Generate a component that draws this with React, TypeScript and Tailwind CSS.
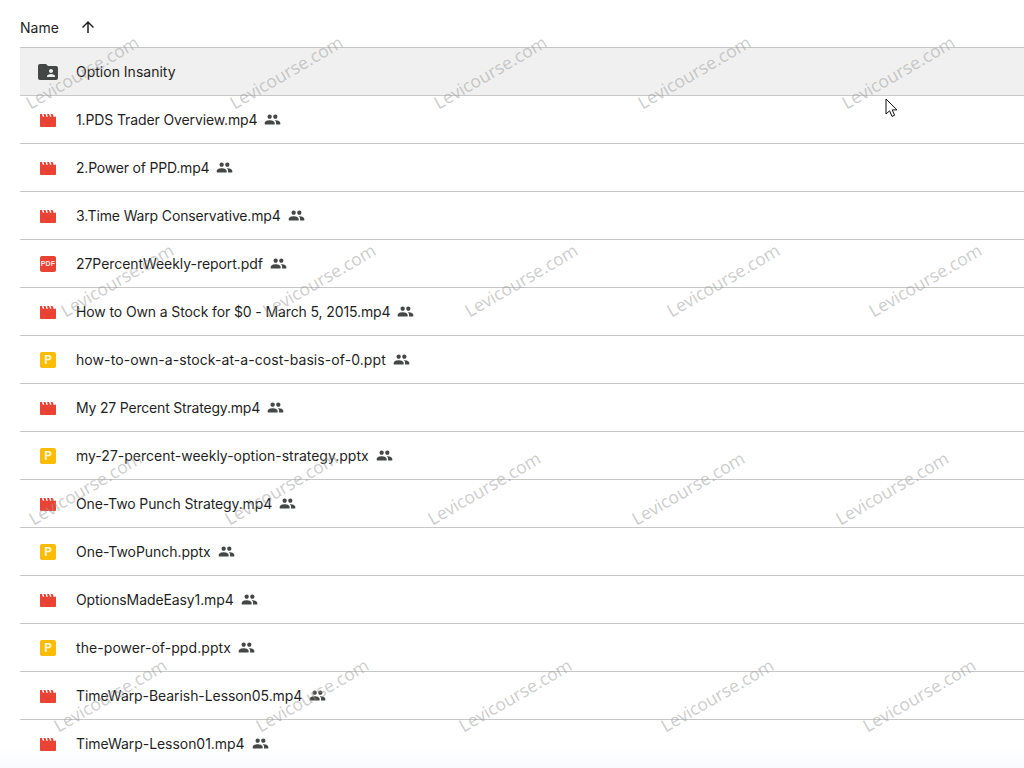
const files: [string, 'v' | 'p' | 'd', string][] = [
  ['1.PDS Trader Overview.mp4', 'v', 'tracking-[-0.12px]'],
  ['2.Power of PPD.mp4', 'v', 'tracking-[-0.2px]'],
  ['3.Time Warp Conservative.mp4', 'v', 'tracking-[-0.15px]'],
  ['27PercentWeekly-report.pdf', 'd', 'tracking-[-0.05px]'],
  ['How to Own a Stock for $0 - March 5, 2015.mp4', 'v', 'tracking-[-0.12px]'],
  ['how-to-own-a-stock-at-a-cost-basis-of-0.ppt', 'p', 'tracking-[0.08px]'],
  ['My 27 Percent Strategy.mp4', 'v', 'tracking-[-0.19px]'],
  ['my-27-percent-weekly-option-strategy.pptx', 'p', 'tracking-normal'],
  ['One-Two Punch Strategy.mp4', 'v', 'tracking-[-0.11px]'],
  ['One-TwoPunch.pptx', 'p', 'tracking-[-0.05px]'],
  ['OptionsMadeEasy1.mp4', 'v', 'tracking-[-0.1px]'],
  ['the-power-of-ppd.pptx', 'p', 'tracking-[0.07px]'],
  ['TimeWarp-Bearish-Lesson05.mp4', 'v', 'tracking-[-0.07px]'],
  ['TimeWarp-Lesson01.mp4', 'v', 'tracking-[-0.05px]'],
];

const marks: [number, number][] = [
  [82, 72], [286, 72], [490, 72], [694, 72], [898, 72],
  [117, 280], [319, 280], [521, 280], [723, 280], [925, 280],
  [85, 488], [281, 488], [484, 488], [688, 488], [892, 488],
  [110, 695], [312, 695], [515, 695], [717, 695], [919, 695],
];

function People() {
  return (
    <svg width="17" height="17" viewBox="0 0 24 24" fill="#444746" className="shrink-0">
      <path d="M16 11c1.66 0 2.99-1.34 2.99-3S17.66 5 16 5s-3 1.34-3 3 1.34 3 3 3zm-8 0c1.66 0 2.99-1.34 2.99-3S9.66 5 8 5 5 6.34 5 8s1.34 3 3 3zm0 2c-2.33 0-7 1.17-7 3.5V19h14v-2.5C15 14.17 10.33 13 8 13zm8 0c-.29 0-.62.02-.97.05 1.16.84 1.97 1.97 1.97 3.45V19h6v-2.5c0-2.33-4.67-3.5-7-3.5z" />
    </svg>
  );
}

function Video() {
  return (
    <svg width="16" height="16" viewBox="0 0 16 16" className="shrink-0">
      <path
        fill="#ea4335"
        d="M0 2h2l.8 2.8h1.5L3.4 2h2.1l.9 2.8h1.5L7 2h2.1l.9 2.8h1.5L10.6 2h2.1l.9 2.8H16V14a1 1 0 0 1-1 1H1a1 1 0 0 1-1-1z"
      />
    </svg>
  );
}

function Pdf() {
  return (
    <div className="w-4 h-4 rounded-[2px] bg-[#ea4335] flex items-center justify-center shrink-0 text-[#fde8e6] font-bold text-[7px] tracking-[0.2px] leading-none font-['Liberation_Sans',sans-serif]">
      PDF
    </div>
  );
}

function Ppt() {
  return (
    <div className="w-4 h-4 rounded-[2px] bg-[#fbbc04] flex items-center justify-center shrink-0 text-[#fff6dc] font-bold text-[12px] leading-none font-['Roboto',sans-serif]">
      P
    </div>
  );
}

function Row({ name, kind, track }: { name: string; kind: 'v' | 'p' | 'd'; track: string }) {
  return (
    <div className="h-12 border-b border-[#c7c7c7] last:border-b-0 last:pb-px flex items-center pl-5 gap-5">
      {kind === 'v' ? <Video /> : kind === 'p' ? <Ppt /> : <Pdf />}
      <div className="flex items-center gap-[7px]">
        <span className={`text-[14px] text-[#1f1f1f] ${track}`}>{name}</span>
        <People />
      </div>
    </div>
  );
}

export default function App() {
  return (
    <div className="relative w-[1024px] h-[768px] overflow-hidden bg-white font-['Inter',sans-serif]">
      <div className="absolute left-0 right-0 bottom-0 h-[20px] bg-gradient-to-b from-white to-[#f8fafd]" />

      <div className="relative pl-5">
        <div className="h-12 border-b border-[#c7c7c7] flex items-center gap-5 pt-2 text-[14px] text-[#1f1f1f]">
          <span>Name</span>
          <svg width="18" height="18" viewBox="0 0 24 24" fill="#1f1f1f" className="-mt-0.5">
            <path d="M4 12l1.41 1.41L11 7.83V20h2V7.83l5.58 5.59L20 12l-8-8-8 8z" />
          </svg>
        </div>
        <div className="h-12 border-b border-[#c7c7c7] bg-[#f0f0f0] flex items-center pl-4 gap-4">
          <svg width="24" height="24" viewBox="0 0 24 24" fill="#444746" className="shrink-0">
            <path d="M20 6h-8l-2-2H4c-1.1 0-2 .9-2 2v12c0 1.1.9 2 2 2h16c1.1 0 2-.9 2-2V8c0-1.1-.9-2-2-2zm-5 3c1.1 0 2 .9 2 2s-.9 2-2 2-2-.9-2-2 .9-2 2-2zm4 8h-8v-1c0-1.33 2.67-2 4-2s4 .67 4 2v1z" />
          </svg>
          <span className="text-[14px] text-[#1f1f1f]">Option Insanity</span>
        </div>
        {files.map(([n, k, t]) => (
          <Row key={n} name={n} kind={k} track={t} />
        ))}
      </div>

      {marks.map(([x, y]) => (
        <span
          key={`${x}-${y}`}
          className="absolute -translate-x-1/2 -translate-y-1/2 -rotate-[30deg] whitespace-nowrap text-[17.5px] text-[#9a9a9a]/50 font-['Open_Sans',sans-serif] pointer-events-none"
          style={{ left: x, top: y }}
        >
          Levicourse.com
        </span>
      ))}

      <svg width="14" height="21" viewBox="0 0 14 21" className="absolute left-[885px] top-[98px]">
        <path d="M1 1v15l3.6-3.2 2.4 5.6 2.6-1.1-2.4-5.4H12z" fill="#fff" stroke="#111" strokeWidth="1" strokeLinejoin="round" />
      </svg>
    </div>
  );
}
